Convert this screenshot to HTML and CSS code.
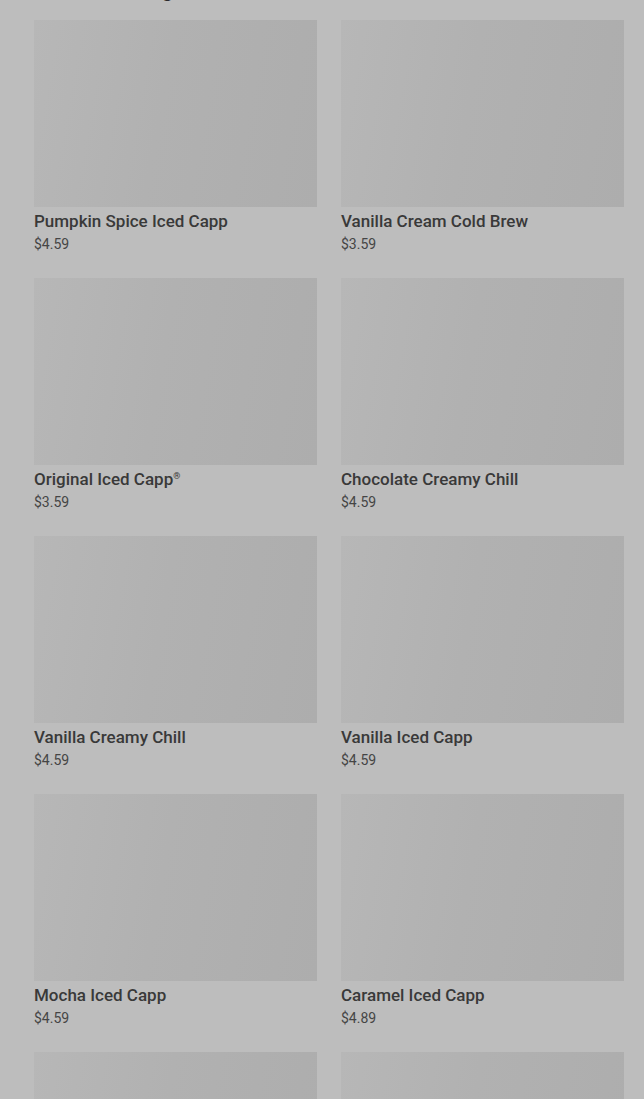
FILE: index.html
```html
<!DOCTYPE html>
<html lang="en">
<head>
    <meta charset="UTF-8">
    <meta name="viewport" content="width=device-width, initial-scale=1.0">
    <title>Frozen Beverages</title>
    <link rel="stylesheet" href="styles.css">
</head>
<body>
    <div class="menu-page">
        <h2 class="section-title">Frozen Beverages</h2>
        <div class="product-grid">
            <div class="product-card">
                <div class="product-image"></div>
                <div class="product-name">Pumpkin Spice Iced Capp</div>
                <div class="product-price">$4.59</div>
            </div>
            <div class="product-card">
                <div class="product-image"></div>
                <div class="product-name">Vanilla Cream Cold Brew</div>
                <div class="product-price">$3.59</div>
            </div>
            <div class="product-card">
                <div class="product-image"></div>
                <div class="product-name">Original Iced Capp<sup>®</sup></div>
                <div class="product-price">$3.59</div>
            </div>
            <div class="product-card">
                <div class="product-image"></div>
                <div class="product-name">Chocolate Creamy Chill</div>
                <div class="product-price">$4.59</div>
            </div>
            <div class="product-card">
                <div class="product-image"></div>
                <div class="product-name">Vanilla Creamy Chill</div>
                <div class="product-price">$4.59</div>
            </div>
            <div class="product-card">
                <div class="product-image"></div>
                <div class="product-name">Vanilla Iced Capp</div>
                <div class="product-price">$4.59</div>
            </div>
            <div class="product-card">
                <div class="product-image"></div>
                <div class="product-name">Mocha Iced Capp</div>
                <div class="product-price">$4.59</div>
            </div>
            <div class="product-card">
                <div class="product-image"></div>
                <div class="product-name">Caramel Iced Capp</div>
                <div class="product-price">$4.89</div>
            </div>
            <div class="product-card">
                <div class="product-image"></div>
                <div class="product-name">Chocolate Iced Capp</div>
                <div class="product-price">$4.59</div>
            </div>
            <div class="product-card">
                <div class="product-image"></div>
                <div class="product-name">Iced Capp Supreme</div>
                <div class="product-price">$4.59</div>
            </div>
        </div>
    </div>
</body>
</html>
```

FILE: styles.css
```css
body {
    font-family: Roboto, 'Liberation Sans', sans-serif;
    background: #bdbdbd;
    color: #393939;
    margin: 0;
}

.menu-page {
    padding: 0 20px 40px 34px;
    margin-top: -22px;
}

.section-title {
    font-size: 20px;
    line-height: 24px;
    font-weight: 700;
    color: #2a2a2a;
    margin: 0 0 18px;
}

.product-grid {
    display: grid;
    grid-template-columns: 1fr 1fr;
    column-gap: 24px;
    row-gap: 25px;
}

.product-image {
    height: 187px;
    background: linear-gradient(100deg, #b7b7b7 0%, #b1b1b1 45%, #adadad 100%);
}

.product-name {
    font-size: 17px;
    line-height: 22px;
    font-weight: 500;
    margin-top: 3px;
}

.product-name sup {
    font-size: 9px;
    vertical-align: 6px;
    line-height: 0;
}

.product-price {
    font-size: 14px;
    line-height: 18px;
    margin-top: 3px;
    color: #454545;
}
```
